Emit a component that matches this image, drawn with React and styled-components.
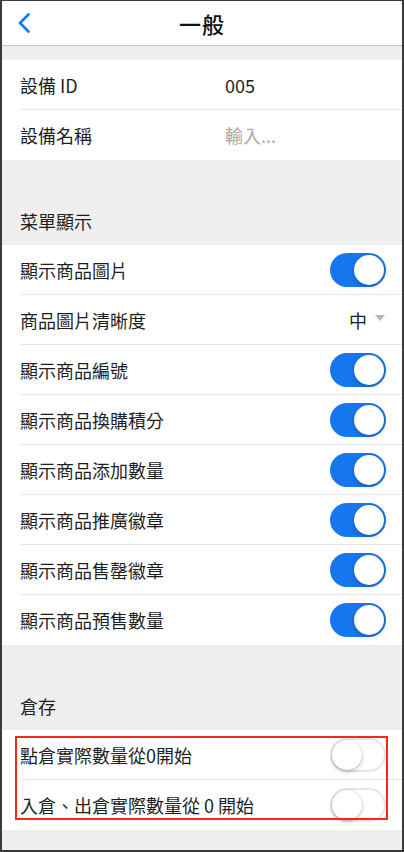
import React from 'react';
import styled, { createGlobalStyle } from 'styled-components';

const GlobalStyle = createGlobalStyle`
  html, body {
    margin: 0;
    padding: 0;
    background: #fff;
  }
  body {
    font-family: "Noto Sans CJK TC", "Noto Sans", sans-serif;
  }
`;

const menuItems = [
  { label: '顯示商品圖片', type: 'toggle', on: true },
  { label: '商品圖片清晰度', type: 'select', value: '中' },
  { label: '顯示商品編號', type: 'toggle', on: true },
  { label: '顯示商品換購積分', type: 'toggle', on: true },
  { label: '顯示商品添加數量', type: 'toggle', on: true },
  { label: '顯示商品推廣徽章', type: 'toggle', on: true },
  { label: '顯示商品售罄徽章', type: 'toggle', on: true },
  { label: '顯示商品預售數量', type: 'toggle', on: true, last: true }
];

const stockItems = [
  { label: '點倉實際數量從0開始', on: false },
  { label: '入倉、出倉實際數量從 0 開始', on: false, last: true }
];

const Toggle = ({ on }) => (
  <Track $on={on}>
    <Knob $on={on} />
  </Track>
);

const App = () => {
  return (
    <>
      <GlobalStyle />
      <Screen>
        <Header>
          <BackButton>
            <svg width="14" height="22" viewBox="0 0 14 22">
              <path
                d="M11.5 2.5 L3 11 L11.5 19.5"
                fill="none"
                stroke="#1a7cf0"
                strokeWidth="2.8"
                strokeLinecap="round"
                strokeLinejoin="round"
              />
            </svg>
          </BackButton>
          <Title>一般</Title>
        </Header>

        <Gap />

        <Group>
          <Row $divider>
            <Label>設備 ID</Label>
            <Value>005</Value>
          </Row>
          <Row>
            <Label>設備名稱</Label>
            <Value $placeholder>輸入...</Value>
          </Row>
        </Group>

        <SectionTitle>菜單顯示</SectionTitle>

        <Group>
          {menuItems.map(item => (
            <Row key={item.label} $divider={!item.last}>
              <Label>{item.label}</Label>
              {item.type === 'toggle' ? (
                <Toggle on={item.on} />
              ) : (
                <Select>
                  {item.value}
                  <Caret />
                </Select>
              )}
            </Row>
          ))}
        </Group>

        <SectionTitle>倉存</SectionTitle>

        <Group>
          {stockItems.map(item => (
            <Row key={item.label} $divider={!item.last}>
              <Label>{item.label}</Label>
              <Toggle on={item.on} />
            </Row>
          ))}
          <Highlight />
        </Group>

        <Footer />
      </Screen>
    </>
  );
};

const Screen = styled.div`
  width: 404px;
  height: 852px;
  box-sizing: border-box;
  border: 2px solid #3a3a3a;
  border-top-width: 1px;
  background: #efefef;
  display: flex;
  flex-direction: column;
  overflow: hidden;
`;

const Header = styled.div`
  position: relative;
  height: 44px;
  background: #fff;
  border-bottom: 1px solid #c4c4c4;
  display: flex;
  align-items: center;
  justify-content: center;
  flex-shrink: 0;
`;

const BackButton = styled.div`
  position: absolute;
  left: 15px;
  top: 11px;
  display: flex;
`;

const Title = styled.h1`
  margin: 0;
  font-size: 22px;
  font-weight: 500;
  color: #111;
  letter-spacing: 1px;
`;

const Gap = styled.div`
  height: 14px;
  flex-shrink: 0;
`;

const Group = styled.div`
  position: relative;
  background: #fff;
  flex-shrink: 0;
`;

const Row = styled.div`
  position: relative;
  height: 50px;
  display: flex;
  align-items: center;
  padding: 0 16px 0 18px;

  &::after {
    content: '';
    display: ${p => (p.$divider ? 'block' : 'none')};
    position: absolute;
    left: 18px;
    right: 0;
    bottom: 0;
    height: 1px;
    background: #e8e8e8;
  }
`;

const Label = styled.span`
  flex: 1;
  font-size: 18px;
  color: #1e1e1e;
  white-space: nowrap;
`;

const Value = styled.span`
  position: absolute;
  left: 223px;
  font-size: 18px;
  color: ${p => (p.$placeholder ? '#a8a8a8' : '#1e1e1e')};
`;

const SectionTitle = styled.div`
  height: 85px;
  box-sizing: border-box;
  padding: 0 18px 12px;
  display: flex;
  align-items: flex-end;
  font-size: 18px;
  line-height: 24px;
  color: #1e1e1e;
  flex-shrink: 0;
`;

const Track = styled.div`
  position: relative;
  width: 56px;
  height: 34px;
  box-sizing: border-box;
  border-radius: 17px;
  background: ${p => (p.$on ? '#1677ee' : '#fff')};
  border: 2px solid ${p => (p.$on ? '#1677ee' : '#e6e6e6')};
  flex-shrink: 0;
`;

const Knob = styled.div`
  position: absolute;
  top: 0;
  left: ${p => (p.$on ? '22px' : '0')};
  width: 30px;
  height: 30px;
  border-radius: 50%;
  background: #fff;
  box-shadow: 0 2px 4px rgba(0, 0, 0, 0.22), 0 0 1px rgba(0, 0, 0, 0.2);
`;

const Select = styled.div`
  display: flex;
  align-items: center;
  gap: 8px;
  font-size: 18px;
  color: #1e1e1e;
  margin-right: 1px;
`;

const Caret = styled.span`
  width: 0;
  height: 0;
  border-left: 5px solid transparent;
  border-right: 5px solid transparent;
  border-top: 6px solid #b8b8b8;
  margin-top: -4px;
`;

const Highlight = styled.div`
  position: absolute;
  left: 13px;
  top: 6px;
  width: 373px;
  height: 84px;
  box-sizing: border-box;
  border: 2px solid #f42b14;
  pointer-events: none;
`;

const Footer = styled.div`
  flex: 1;
`;

export default App;
